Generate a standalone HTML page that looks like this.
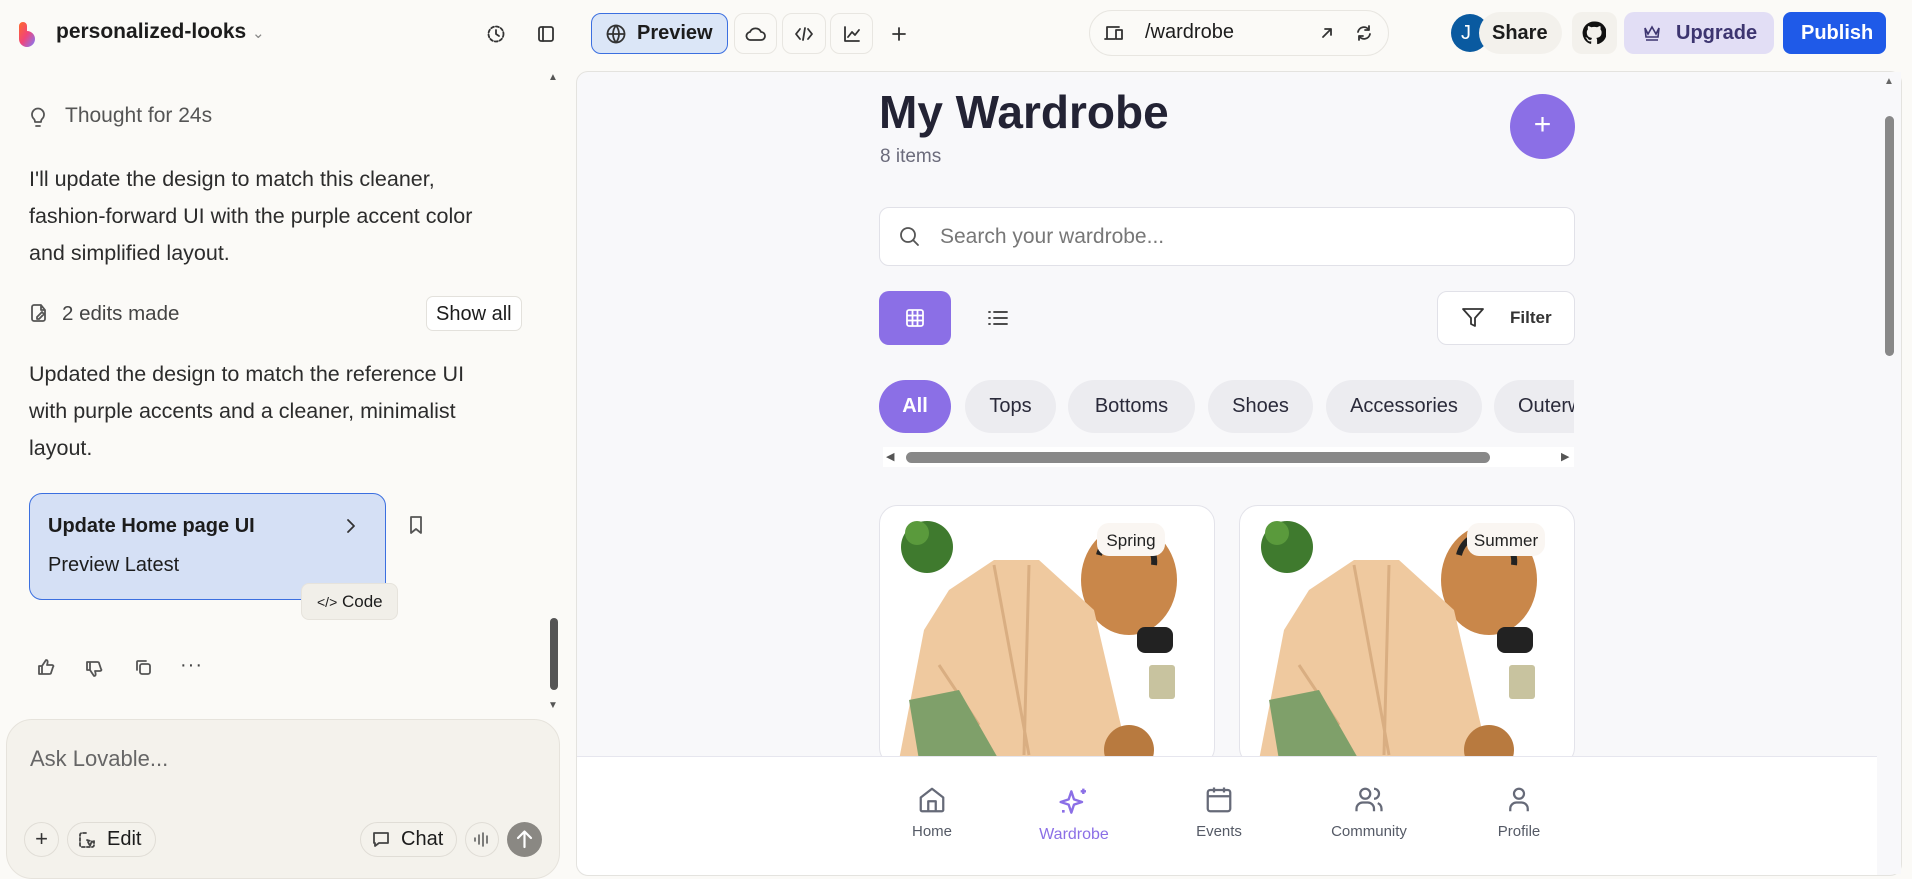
<!DOCTYPE html>
<html><head><meta charset="utf-8"><style>
*{box-sizing:border-box;margin:0;padding:0}
body{width:1912px;height:877px;overflow:hidden;background:#fbfaf7;font-family:"Liberation Sans",sans-serif;color:#1c1c1c;position:relative}
.a{position:absolute}
.ic{stroke:#333;fill:none;stroke-width:1.8;stroke-linecap:round;stroke-linejoin:round}
.btn{border:1px solid #e8e6e1;border-radius:10px;background:#fbfaf7}
.t{font-size:21.5px;line-height:37px;color:#2c2c2c;white-space:nowrap}
.chip{position:absolute;top:380px;height:53px;border-radius:27px;background:#ececf0;font-size:20px;color:#2a2a3a;display:flex;align-items:center;justify-content:center}
.nav{position:absolute;top:785px;width:120px;text-align:center;font-size:15px;color:#555a66}
.nav svg{display:block;margin:0 auto 8px}
</style></head><body>
<!-- top bar left -->
<svg class="a" style="left:17px;top:22px" width="26" height="26" viewBox="0 0 26 26"><defs><linearGradient id="g" x1="0" y1="0" x2="1" y2="1"><stop offset="0" stop-color="#ff6a2a"/><stop offset=".5" stop-color="#f0457a"/><stop offset="1" stop-color="#7b7bff"/></linearGradient></defs><path d="M2 4a4 4 0 0 1 8 0v5a8 8 0 1 1-8 8z" fill="url(#g)"/></svg>
<div class="a" style="left:56px;top:20px;font-size:21px;font-weight:bold">personalized-looks <span style="font-weight:normal;color:#888;font-size:15px">&#8964;</span></div>
<svg class="a ic" style="left:486px;top:24px" width="20" height="20" viewBox="0 0 20 20"><circle cx="10" cy="10" r="7.5" stroke-dasharray="3 2"/><path d="M10 6v4l3 2"/></svg>
<svg class="a ic" style="left:536px;top:24px" width="20" height="20" viewBox="0 0 20 20"><rect x="3" y="3" width="14" height="14" rx="2"/><path d="M7 3v14"/></svg>
<div class="a" style="left:591px;top:13px;width:137px;height:41px;border:1.5px solid #3b6fe0;background:#dbe6f7;border-radius:10px;font-size:20px;font-weight:bold;padding:8px 0 0 45px">Preview</div>
<svg class="a ic" style="left:605px;top:23px" width="22" height="22" viewBox="0 0 22 22"><circle cx="11" cy="11" r="8.5"/><path d="M2.5 11h17M11 2.5c-4 5-4 12 0 17M11 2.5c4 5 4 12 0 17"/></svg>
<div class="a btn" style="left:734px;top:13px;width:43px;height:41px"></div>
<svg class="a ic" style="left:745px;top:24px" width="22" height="20" viewBox="0 0 22 20"><path d="M6 16h10a4 4 0 0 0 0-8 6 6 0 0 0-11 0 4 4 0 0 0 1 8z"/></svg>
<div class="a btn" style="left:782px;top:13px;width:44px;height:41px"></div>
<svg class="a ic" style="left:794px;top:24px" width="20" height="20" viewBox="0 0 20 20"><path d="M6 5l-4 5 4 5M14 5l4 5-4 5M11 4l-2 12"/></svg>
<div class="a btn" style="left:830px;top:13px;width:43px;height:41px"></div>
<svg class="a ic" style="left:842px;top:24px" width="20" height="20" viewBox="0 0 20 20"><path d="M3 3v14h14M6 13l4-5 3 3 4-5"/></svg>
<svg class="a ic" style="left:890px;top:25px" width="18" height="18" viewBox="0 0 18 18"><path d="M9 3v12M3 9h12"/></svg>
<!-- url bar -->
<div class="a" style="left:1089px;top:10px;width:300px;height:46px;border:1px solid #e8e6e1;border-radius:23px"></div>
<svg class="a ic" style="left:1104px;top:24px" width="20" height="18" viewBox="0 0 20 18"><path d="M3 14V3h12M1 15h10M12 6h6v9h-6z"/></svg>
<div class="a" style="left:1145px;top:21px;font-size:20px">/wardrobe</div>
<svg class="a ic" style="left:1320px;top:26px" width="14" height="14" viewBox="0 0 14 14"><path d="M3 11l8-8M5 3h6v6"/></svg>
<svg class="a ic" style="left:1355px;top:24px" width="18" height="18" viewBox="0 0 18 18"><path d="M3 8a6 6 0 0 1 11-2M15 10a6 6 0 0 1-11 2M14 2v4h-4M4 16v-4h4"/></svg>
<!-- right buttons -->
<div class="a" style="left:1451px;top:14px;width:38px;height:38px;border-radius:50%;background:#0a5aa0;color:#fff;font-size:20px;padding:8px 0 0 10px">J</div>
<div class="a" style="left:1479px;top:12px;width:83px;height:42px;border-radius:21px;background:#f3f1ec;font-size:20px;font-weight:bold;padding:10px 0 0 13px">Share</div>
<div class="a" style="left:1572px;top:12px;width:45px;height:42px;border-radius:10px;background:#f3f1ec"></div>
<svg class="a" style="left:1582px;top:21px" width="24" height="24" viewBox="0 0 24 24"><path fill="#111" d="M12 .5a11.5 11.5 0 0 0-3.6 22.4c.6.1.8-.3.8-.6v-2c-3.2.7-3.9-1.5-3.9-1.5-.5-1.3-1.3-1.7-1.3-1.7-1-.7.1-.7.1-.7 1.2.1 1.8 1.2 1.8 1.2 1 1.8 2.8 1.3 3.5 1 .1-.8.4-1.3.7-1.6-2.6-.3-5.3-1.3-5.3-5.7 0-1.3.5-2.3 1.2-3.1-.1-.3-.5-1.5.1-3.1 0 0 1-.3 3.2 1.2a11 11 0 0 1 5.8 0c2.2-1.5 3.2-1.2 3.2-1.2.6 1.6.2 2.8.1 3.1.7.8 1.2 1.8 1.2 3.1 0 4.4-2.7 5.4-5.3 5.7.4.4.8 1.1.8 2.2v3.3c0 .3.2.7.8.6A11.5 11.5 0 0 0 12 .5z"/></svg>
<div class="a" style="left:1624px;top:12px;width:150px;height:42px;border-radius:10px;background:#e2def5;font-size:20px;font-weight:bold;color:#3d3570;padding:10px 0 0 52px">Upgrade</div>
<svg class="a" style="left:1642px;top:22px" width="20" height="20" viewBox="0 0 20 20" fill="none" stroke="#3d3570" stroke-width="1.6"><path d="M3 6l3 6 4-7 4 7 3-6-1 9H4zM4 18h12"/></svg>
<div class="a" style="left:1783px;top:12px;width:103px;height:42px;border-radius:8px;background:#1f5ae8;color:#fff;font-size:20px;font-weight:bold;padding:10px 0 0 18px">Publish</div>

<!-- left chat -->
<div class="a" style="left:548px;top:72px;font-size:10px;color:#555">&#9650;</div>
<svg class="a ic" style="left:29px;top:106px" width="18" height="22" viewBox="0 0 18 22"><path d="M6 16h6M7 20h4M5 13a6 6 0 1 1 8 0c-1 1-1 2-1 3H6c0-1 0-2-1-3z" stroke="#555"/></svg>
<div class="a" style="left:65px;top:104px;font-size:21px;color:#555">Thought for 24s</div>
<div class="a t" style="left:29px;top:161px">I'll update the design to match this cleaner,<br>fashion-forward UI with the purple accent color<br>and simplified layout.</div>
<svg class="a ic" style="left:30px;top:303px" width="18" height="20" viewBox="0 0 18 20"><path d="M11 2H4a2 2 0 0 0-2 2v12a2 2 0 0 0 2 2h9a2 2 0 0 0 2-2V7zM11 2v5h4M7 14l5-5 2 2-5 5H7z" stroke="#555"/></svg>
<div class="a" style="left:62px;top:302px;font-size:20.5px;color:#444">2 edits made</div>
<div class="a" style="left:426px;top:296px;width:96px;height:35px;border:1px solid #e3e1dc;border-radius:7px;background:#fff;font-size:20px;padding:6px 0 0 9px">Show all</div>
<div class="a t" style="left:29px;top:356px">Updated the design to match the reference UI<br>with purple accents and a cleaner, minimalist<br>layout.</div>
<div class="a" style="left:29px;top:493px;width:357px;height:107px;border:1.5px solid #3b6fe0;border-radius:13px;background:#d5e0f5"></div>
<div class="a" style="left:48px;top:515px;font-size:20px;font-weight:bold">Update Home page UI</div>
<div class="a" style="left:48px;top:554px;font-size:20px">Preview Latest</div>
<svg class="a ic" style="left:344px;top:517px" width="14" height="18" viewBox="0 0 14 18"><path d="M4 3l6 6-6 6"/></svg>
<svg class="a ic" style="left:407px;top:515px" width="18" height="20" viewBox="0 0 18 20"><path d="M4 2h10v16l-5-4-5 4z" stroke="#555"/></svg>
<div class="a" style="left:301px;top:583px;width:97px;height:37px;border-radius:8px;background:#f1efe9;border:1px solid #e6e3dc;font-size:17px;padding:8px 0 0 15px"><span style="font-size:14px">&lt;/&gt;</span> Code</div>
<svg class="a ic" style="left:37px;top:658px" width="18" height="18" viewBox="0 0 18 18"><path d="M5 8v8H2V8zM5 8l4-6c2 0 2 2 1 5h5c1 0 2 1 1 2l-2 6c0 1-1 1-2 1H5" stroke="#555"/></svg>
<svg class="a ic" style="left:85px;top:660px" width="18" height="18" viewBox="0 0 18 18"><path d="M5 10V2H2v8zM5 10l4 6c2 0 2-2 1-5h5c1 0 2-1 1-2l-2-6c0-1-1-1-2-1H5" stroke="#555"/></svg>
<svg class="a ic" style="left:134px;top:658px" width="18" height="18" viewBox="0 0 18 18"><rect x="6" y="6" width="10" height="10" rx="2" stroke="#555"/><path d="M3 12V4a1 1 0 0 1 1-1h8" stroke="#555"/></svg>
<div class="a" style="left:180px;top:654px;font-size:20px;color:#444;letter-spacing:1px">&middot;&middot;&middot;</div>
<div class="a" style="left:550px;top:618px;width:8px;height:72px;border-radius:4px;background:#555"></div>
<div class="a" style="left:548px;top:700px;font-size:10px;color:#555">&#9660;</div>
<!-- input -->
<div class="a" style="left:6px;top:719px;width:554px;height:160px;border:1px solid #e6e3dc;border-radius:26px;background:#f4f2ec"></div>
<div class="a" style="left:30px;top:746px;font-size:22px;color:#666">Ask Lovable...</div>
<div class="a" style="left:24px;top:822px;width:35px;height:35px;border:1px solid #e0ddd6;border-radius:50%;text-align:center;font-size:22px;line-height:32px;color:#333">+</div>
<div class="a" style="left:67px;top:822px;width:89px;height:35px;border:1px solid #e0ddd6;border-radius:18px;font-size:20px;padding:5px 0 0 39px">Edit</div>
<svg class="a ic" style="left:78px;top:831px" width="18" height="18" viewBox="0 0 18 18"><path d="M8 2H4a2 2 0 0 0-2 2v10a2 2 0 0 0 2 2h10a2 2 0 0 0 2-2v-4M9 9l7 2-3 1-1 3z" stroke="#444" stroke-dasharray="3 2"/></svg>
<div class="a" style="left:360px;top:822px;width:97px;height:35px;border:1px solid #e0ddd6;border-radius:18px;font-size:20px;padding:5px 0 0 40px">Chat</div>
<svg class="a ic" style="left:371px;top:830px" width="20" height="19" viewBox="0 0 20 19"><path d="M3 3h14v10H8l-4 3v-3H3z" stroke="#444"/></svg>
<div class="a" style="left:465px;top:822px;width:34px;height:35px;border:1px solid #e0ddd6;border-radius:50%"></div>
<svg class="a ic" style="left:473px;top:831px" width="18" height="17" viewBox="0 0 18 17"><path d="M2 7v3M6 4v9M10 2v13M14 5v7" stroke="#555" stroke-width="1.5"/></svg>
<div class="a" style="left:507px;top:822px;width:35px;height:35px;border-radius:50%;background:#8a8883"></div>
<svg class="a" style="left:515px;top:829px" width="19" height="21" viewBox="0 0 19 21" fill="none" stroke="#fff" stroke-width="2.2" stroke-linecap="round" stroke-linejoin="round"><path d="M9.5 18V3M3 9l6.5-6.5L16 9"/></svg>

<!-- preview panel -->
<div class="a" style="left:576px;top:71px;width:1326px;height:805px;border:1px solid #e4e3df;border-radius:12px;background:#f8f8fa;overflow:hidden">
 <div class="a" style="left:302px;top:13px;font-size:46px;font-weight:bold;color:#232334">My Wardrobe</div>
 <div class="a" style="left:303px;top:74px;font-size:19px;color:#6b6b7b">8 items</div>
 <div class="a" style="left:933px;top:22px;width:65px;height:65px;border-radius:50%;background:#8b6fe6;color:#fff;font-size:30px;text-align:center;line-height:62px">+</div>
 <div class="a" style="left:302px;top:135px;width:696px;height:59px;border:1px solid #e1e1e8;border-radius:10px;background:#fff"></div>
 <svg class="a ic" style="left:322px;top:154px" width="22" height="22" viewBox="0 0 22 22"><circle cx="9" cy="9" r="7" stroke="#555"/><path d="M14 14l5 5" stroke="#555"/></svg>
 <div class="a" style="left:363px;top:153px;font-size:21px;color:#777">Search your wardrobe...</div>
 <div class="a" style="left:302px;top:219px;width:72px;height:54px;border-radius:10px;background:#8b6fe6"></div>
 <svg class="a" style="left:328px;top:236px" width="20" height="20" viewBox="0 0 20 20" fill="none" stroke="#fff" stroke-width="1.8"><rect x="2" y="2" width="16" height="16" rx="2"/><path d="M2 7.5h16M2 12.5h16M7.5 2v16M12.5 2v16"/></svg>
 <svg class="a ic" style="left:410px;top:237px" width="22" height="18" viewBox="0 0 22 18"><path d="M7 3h13M7 9h13M7 15h13M2 3h1M2 9h1M2 15h1"/></svg>
 <div class="a" style="left:860px;top:219px;width:138px;height:54px;border:1px solid #e1e1e8;border-radius:10px;background:#fff;font-size:17px;font-weight:bold;color:#333;padding:16px 0 0 72px">Filter</div>
 <svg class="a ic" style="left:884px;top:235px" width="24" height="22" viewBox="0 0 24 22"><path d="M2 2h20l-8 9v8l-4-2v-6z"/></svg>
</div>
<div class="chip" style="left:879px;width:72px;background:#8b6fe6;color:#fff;font-weight:bold">All</div>
<div class="chip" style="left:965px;width:91px">Tops</div>
<div class="chip" style="left:1068px;width:127px">Bottoms</div>
<div class="chip" style="left:1208px;width:105px">Shoes</div>
<div class="chip" style="left:1326px;width:156px">Accessories</div>
<div class="a" style="left:1494px;top:380px;width:80px;height:53px;overflow:hidden"><div class="chip" style="left:0;top:0;width:110px;justify-content:flex-start;padding-left:24px">Outerwear</div></div>
<div class="a" style="left:1574px;top:375px;width:10px;height:65px;background:#f8f8fa"></div>
<div class="a" style="left:883px;top:447px;width:691px;height:20px;background:#fff"></div>
<div class="a" style="left:886px;top:450px;font-size:11px;color:#555">&#9664;</div>
<div class="a" style="left:1561px;top:450px;font-size:11px;color:#555">&#9654;</div>
<div class="a" style="left:906px;top:452px;width:584px;height:11px;border-radius:6px;background:#888"></div>
<!-- cards -->
<svg class="a" style="left:879px;top:505px" width="336" height="252" viewBox="0 0 336 252">
 <defs><clipPath id="c1"><rect x=".5" y=".5" width="335" height="260" rx="18"/></clipPath></defs>
 <rect x=".5" y=".5" width="335" height="260" rx="18" fill="#fff" stroke="#e3e3ea"/>
 <g clip-path="url(#c1)">
 <circle cx="48" cy="42" r="26" fill="#3f7a2e"/><circle cx="38" cy="28" r="12" fill="#5a9a3c"/>
 <ellipse cx="250" cy="75" rx="48" ry="55" fill="#c9874a"/><path d="M220 50a28 28 0 0 1 55 10" fill="none" stroke="#222" stroke-width="6"/>
 <path d="M70 85l45-30 45 0 55 50 35 150H20l25-130z" fill="#efc99f"/>
 <path d="M115 60l35 190M150 60l-5 190M60 160l40 60" stroke="#d9ae82" stroke-width="3" fill="none"/>
 <path d="M30 195l50-10 40 70H40z" fill="#7fa06a"/>
 <rect x="258" y="122" width="36" height="26" rx="8" fill="#222"/>
 <rect x="270" y="160" width="26" height="34" rx="3" fill="#c8c39f"/>
 <circle cx="250" cy="245" r="25" fill="#b87a3f"/>
 </g>
 <rect x="218" y="18" width="68" height="33" rx="12" fill="#faf6f2"/>
 <text x="252" y="41" font-family="Liberation Sans" font-size="17" text-anchor="middle" fill="#222">Spring</text>
</svg>
<svg class="a" style="left:1239px;top:505px" width="336" height="252" viewBox="0 0 336 252">
 <defs><clipPath id="c2"><rect x=".5" y=".5" width="335" height="260" rx="18"/></clipPath></defs>
 <rect x=".5" y=".5" width="335" height="260" rx="18" fill="#fff" stroke="#e3e3ea"/>
 <g clip-path="url(#c2)">
 <circle cx="48" cy="42" r="26" fill="#3f7a2e"/><circle cx="38" cy="28" r="12" fill="#5a9a3c"/>
 <ellipse cx="250" cy="75" rx="48" ry="55" fill="#c9874a"/><path d="M220 50a28 28 0 0 1 55 10" fill="none" stroke="#222" stroke-width="6"/>
 <path d="M70 85l45-30 45 0 55 50 35 150H20l25-130z" fill="#efc99f"/>
 <path d="M115 60l35 190M150 60l-5 190M60 160l40 60" stroke="#d9ae82" stroke-width="3" fill="none"/>
 <path d="M30 195l50-10 40 70H40z" fill="#7fa06a"/>
 <rect x="258" y="122" width="36" height="26" rx="8" fill="#222"/>
 <rect x="270" y="160" width="26" height="34" rx="3" fill="#c8c39f"/>
 <circle cx="250" cy="245" r="25" fill="#b87a3f"/>
 </g>
 <rect x="228" y="18" width="78" height="33" rx="12" fill="#faf6f2"/>
 <text x="267" y="41" font-family="Liberation Sans" font-size="17" text-anchor="middle" fill="#222">Summer</text>
</svg>
<!-- bottom nav -->
<div class="a" style="left:577px;top:756px;width:1300px;height:119px;background:#fff;border-top:1px solid #e6e6ee;border-radius:0 0 0 12px"></div>
<div class="nav" style="left:872px"><svg width="30" height="30" viewBox="0 0 24 24" fill="none" stroke="#666a78" stroke-width="1.8" stroke-linejoin="round"><path d="M3 10l9-7 9 7v10a1 1 0 0 1-1 1H4a1 1 0 0 1-1-1z"/><path d="M9 21v-8h6v8"/></svg>Home</div>
<div class="nav" style="left:1014px;color:#8b6fe6;font-size:16px;top:786px"><svg width="32" height="32" viewBox="0 0 24 24" fill="none" stroke="#8b6fe6" stroke-width="1.8" stroke-linejoin="round"><path d="M10 4l2 6 6 2-6 2-2 6-2-6-6-2 6-2z"/><path d="M19 2v4M17 4h4M4 18v2M3 19h2"/></svg>Wardrobe</div>
<div class="nav" style="left:1159px"><svg width="30" height="30" viewBox="0 0 24 24" fill="none" stroke="#666a78" stroke-width="1.8"><rect x="3" y="4" width="18" height="17" rx="2"/><path d="M3 9h18M8 2v4M16 2v4"/></svg>Events</div>
<div class="nav" style="left:1309px"><svg width="30" height="30" viewBox="0 0 24 24" fill="none" stroke="#666a78" stroke-width="1.8"><circle cx="9" cy="7" r="4"/><path d="M2 21v-2a5 5 0 0 1 5-5h4a5 5 0 0 1 5 5v2M16 3a4 4 0 0 1 0 8M22 21v-2a5 5 0 0 0-3-4.5"/></svg>Community</div>
<div class="nav" style="left:1459px"><svg width="30" height="30" viewBox="0 0 24 24" fill="none" stroke="#666a78" stroke-width="1.8"><circle cx="12" cy="7" r="4"/><path d="M5 21v-2a5 5 0 0 1 5-5h4a5 5 0 0 1 5 5v2"/></svg>Profile</div>
<!-- right scrollbar -->
<div class="a" style="left:1878px;top:72px;width:23px;height:802px;background:#f8f8fa"></div>
<div class="a" style="left:1884px;top:76px;font-size:10px;color:#666">&#9650;</div>
<div class="a" style="left:1885px;top:116px;width:9px;height:240px;border-radius:5px;background:#888"></div>
</body></html>
